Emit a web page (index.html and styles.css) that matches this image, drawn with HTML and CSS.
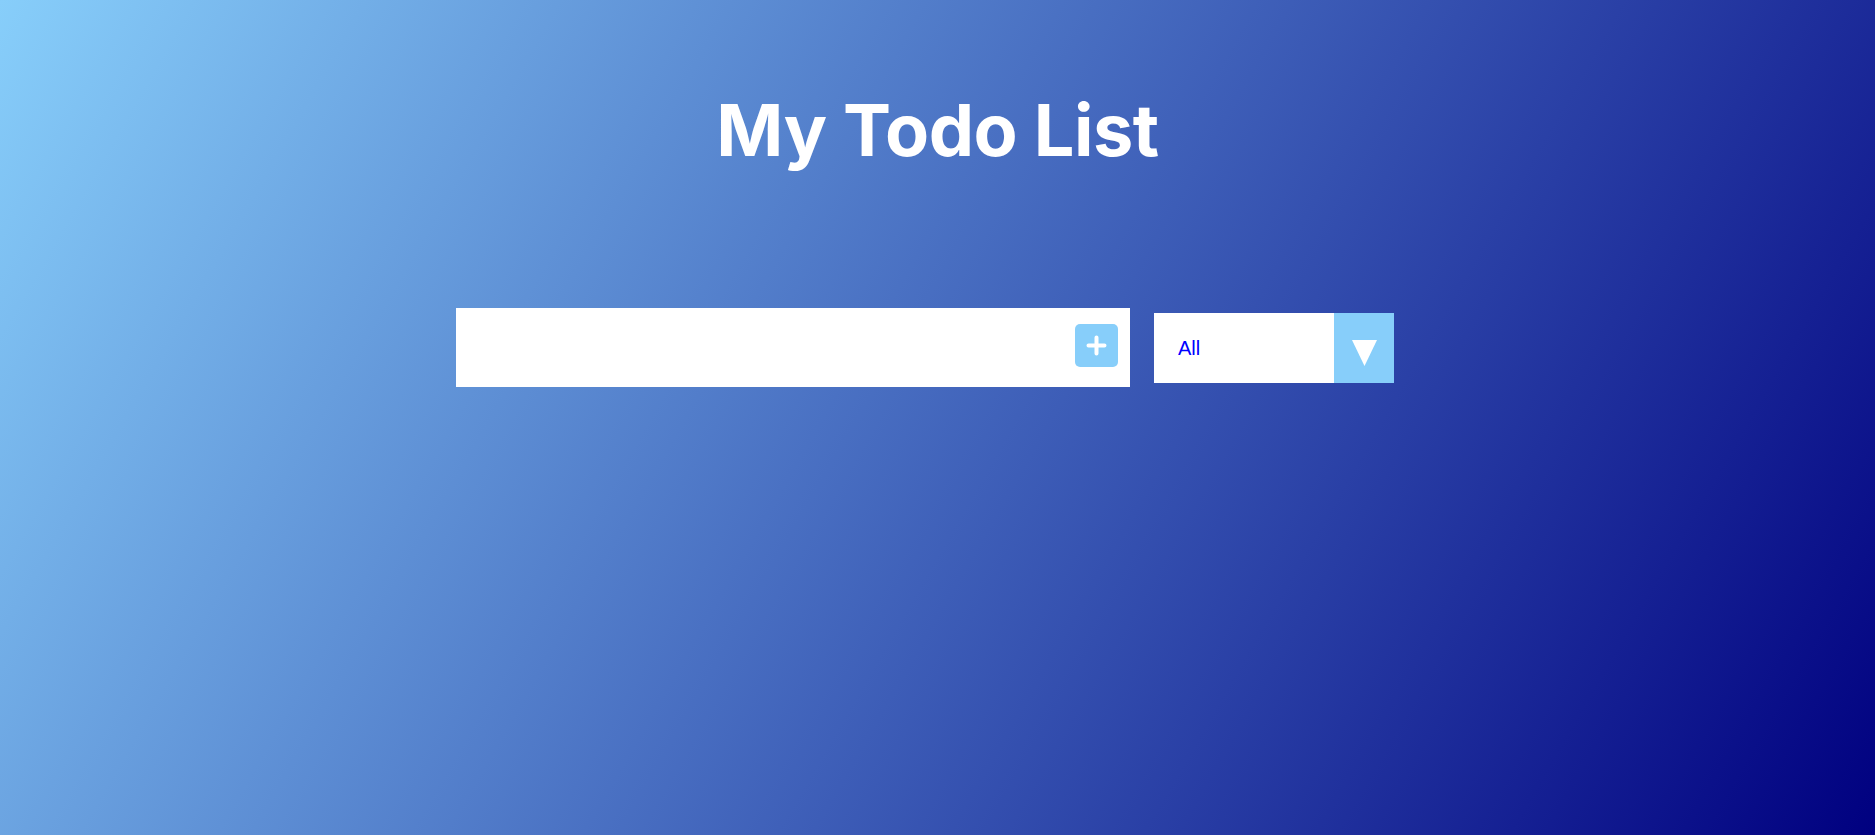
FILE: index.html
```html
<!DOCTYPE html>
<html lang="en">
<head>
<meta charset="utf-8">
<title>My Todo List</title>
<link rel="stylesheet" href="styles.css">
</head>
<body>
  <header class="header">
    <h1 class="title">My Todo List</h1>
  </header>
  <form class="todo-form">
    <div class="todo-box">
      <input class="todo-input" type="text" aria-label="New todo">
      <button class="todo-add" type="button" aria-label="Add">
        <svg width="21" height="21" viewBox="0 0 21 21"><path d="M10.5 2.5v16M2.5 10.5h16" stroke="#fff" stroke-width="4" stroke-linecap="round" fill="none"/></svg>
      </button>
    </div>
    <div class="select">
      <select class="filter" aria-label="Filter">
        <option>All</option>
        <option>Completed</option>
        <option>Uncompleted</option>
      </select>
      <span class="select-arrow">
        <svg width="25" height="26" viewBox="0 0 25 26"><polygon points="0,0 25,0 12.5,26" fill="#fff"/></svg>
      </span>
    </div>
  </form>
</body>
</html>
```

FILE: styles.css
```css
* {
  box-sizing: border-box;
}

html, body {
  margin: 0;
  padding: 0;
}

body {
  height: 100vh;
  background: linear-gradient(120deg, #87cefa, #000080);
  font-family: "Liberation Sans", Arial, sans-serif;
  overflow: hidden;
}

.header {
  padding-top: 94px;
  display: flex;
  justify-content: center;
}

.title {
  margin: 0;
  font-family: Inter, "Liberation Sans", sans-serif;
  font-weight: 700;
  font-size: 72px;
  line-height: 1;
  color: #fff;
  letter-spacing: -0.5px;
}

.todo-form {
  margin-top: 142px;
  padding-right: 1px;
  display: flex;
  justify-content: center;
  align-items: center;
}

.todo-box {
  width: 674px;
  height: 79px;
  background: #fff;
  display: flex;
  align-items: center;
}

.todo-input {
  flex: 1;
  height: 100%;
  border: none;
  outline: none;
  background: transparent;
  padding: 0 20px;
  font-size: 24px;
  font-family: "Liberation Sans", Arial, sans-serif;
}

.todo-add {
  width: 43px;
  height: 43px;
  margin: 0 12px 4px 0;
  padding: 0;
  border: none;
  border-radius: 5px;
  background: #87cefa;
  display: flex;
  align-items: center;
  justify-content: center;
  cursor: pointer;
}

.todo-add svg {
  display: block;
}

.select {
  margin: 0 24px;
  width: 240px;
  height: 70px;
  background: #fff;
  display: flex;
}

.filter {
  flex: 1;
  min-width: 0;
  height: 100%;
  border: none;
  outline: none;
  background: #fff;
  -webkit-appearance: none;
  appearance: none;
  padding: 0 0 0 24px;
  font-size: 20px;
  font-family: "Liberation Sans", Arial, sans-serif;
  color: #0000ff;
  cursor: pointer;
}

.select-arrow {
  width: 60px;
  height: 100%;
  background: #87cefa;
  display: flex;
  justify-content: center;
  align-items: center;
  padding-top: 10px;
}

.select-arrow svg {
  display: block;
}
```
